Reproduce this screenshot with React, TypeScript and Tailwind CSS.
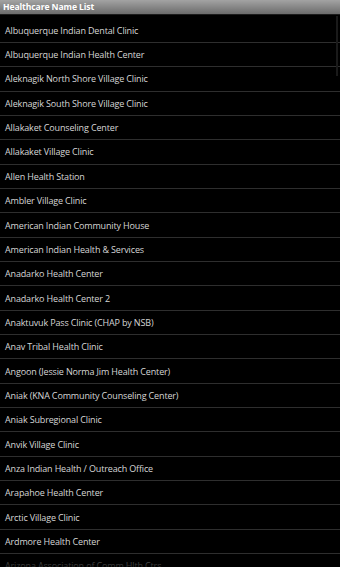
import React from "react";

const items = [
  "Albuquerque Indian Dental Clinic",
  "Albuquerque Indian Health Center",
  "Aleknagik North Shore Village Clinic",
  "Aleknagik South Shore Village Clinic",
  "Allakaket Counseling Center",
  "Allakaket Village Clinic",
  "Allen Health Station",
  "Ambler Village Clinic",
  "American Indian Community House",
  "American Indian Health & Services",
  "Anadarko Health Center",
  "Anadarko Health Center 2",
  "Anaktuvuk Pass Clinic (CHAP by NSB)",
  "Anav Tribal Health Clinic",
  "Angoon (Jessie Norma Jim Health Center)",
  "Aniak (KNA Community Counseling Center)",
  "Aniak Subregional Clinic",
  "Anvik Village Clinic",
  "Anza Indian Health / Outreach Office",
  "Arapahoe Health Center",
  "Arctic Village Clinic",
  "Ardmore Health Center",
  "Arizona Association of Comm Hlth Ctrs",
];

export default function App() {
  return (
    <div
      className="w-[340px] h-[567px] bg-black overflow-hidden relative"
      style={{ fontFamily: '"Open Sans", "DejaVu Sans", sans-serif' }}
    >
      <div className="h-[14px] bg-gradient-to-b from-[#a3a3a3] to-[#6c6c6c] flex items-center pl-[3px]">
        <span className="text-white text-[8.6px] font-bold leading-none tracking-[-0.1px]">
          Healthcare Name List
        </span>
      </div>
      <div className="h-[1px] bg-[#1c1c1c]" />
      <div className="pt-[3.6px]">
        {items.map((t, i) => (
          <div
            key={t}
            className="h-[24.35px] border-b border-[#2e2e2e] flex items-center pl-[5px]"
          >
            <span
              className={
                i === items.length - 1
                  ? "text-[#6a6a6a] text-[9px] leading-none whitespace-nowrap tracking-[-0.15px]"
                  : "text-[#d6d6d6] text-[9px] leading-none whitespace-nowrap tracking-[-0.15px]"
              }
            >
              {t}
            </span>
          </div>
        ))}
      </div>
      <div className="absolute left-0 right-0 bottom-0 h-[12px] bg-gradient-to-b from-transparent to-black/60 pointer-events-none" />
      <div className="absolute right-[2px] top-[16px] w-[2px] h-[60px] bg-[#1a1a1a]" />
    </div>
  );
}
